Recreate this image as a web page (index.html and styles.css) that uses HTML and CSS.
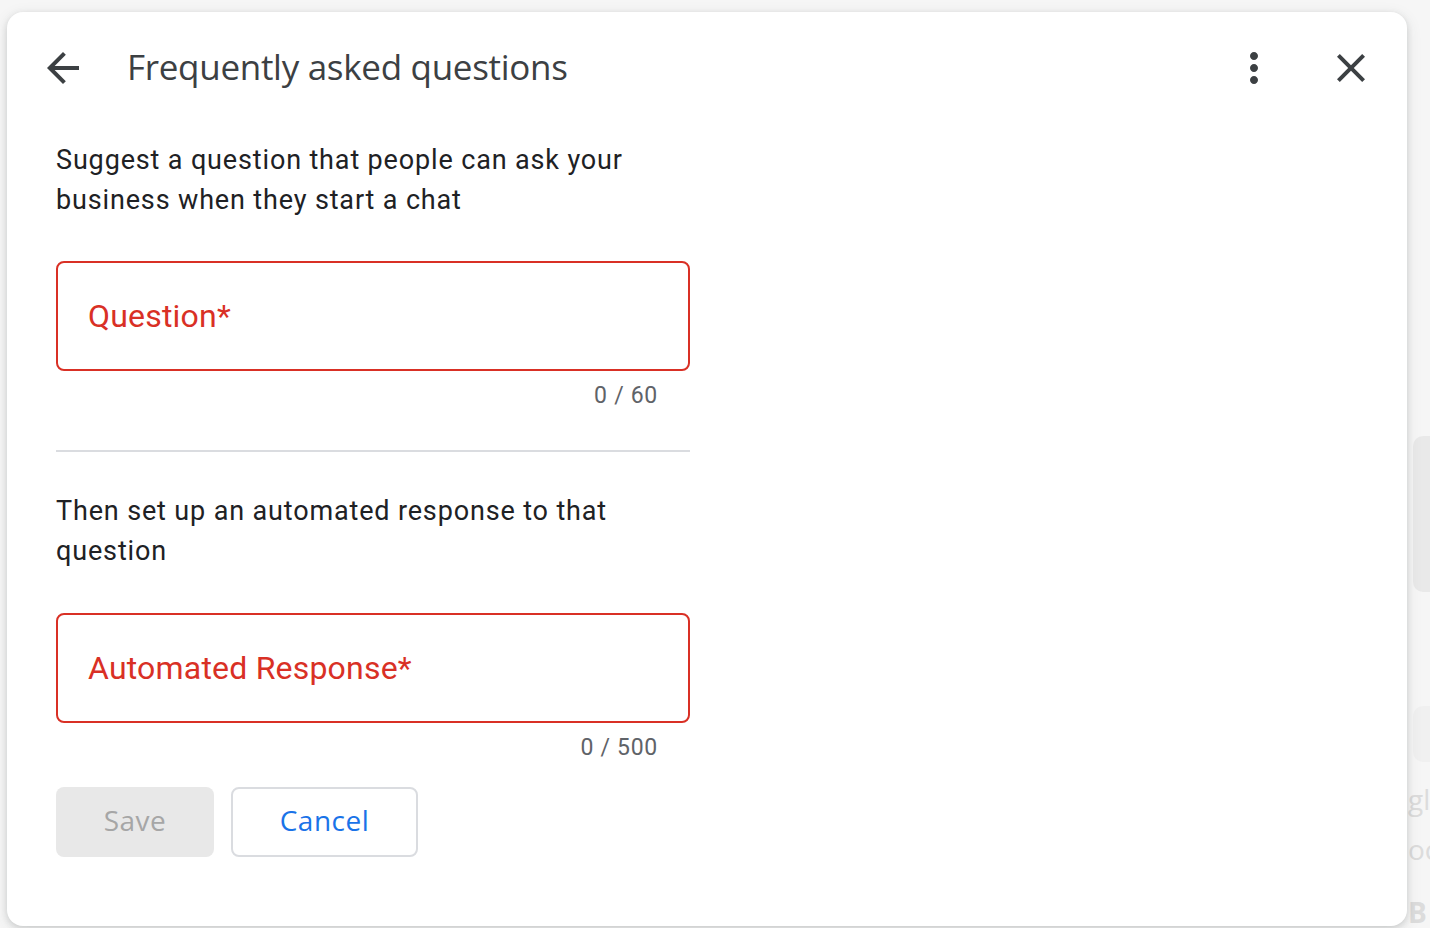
FILE: index.html
```html
<!DOCTYPE html>
<html lang="en">
<head>
<meta charset="utf-8">
<title>Frequently asked questions</title>
<link rel="stylesheet" href="styles.css">
</head>
<body>
<div class="backdrop" aria-hidden="true">
  <div class="bg-card"></div>
  <div class="bg-card bg-card-2"></div>
  <span class="bg-text bg-t1">gl</span>
  <span class="bg-text bg-t2">oc</span>
  <span class="bg-text bg-t3">B</span>
</div>
<div class="dialog">
  <header class="dlg-header">
    <button class="icon-btn" aria-label="Back">
      <svg viewBox="0 0 24 24" width="48" height="48"><path d="M20 11H7.830l5.590-5.590L12 4l-8 8 8 8 1.410-1.410L7.830 13H20v-2z"/></svg>
    </button>
    <h1 class="dlg-title">Frequently asked questions</h1>
    <div class="header-actions">
      <button class="icon-btn" aria-label="More">
        <svg viewBox="0 0 24 24" width="48" height="48"><path d="M12 8c1.1 0 2-.9 2-2s-.9-2-2-2-2 .9-2 2 .9 2 2 2zm0 2c-1.1 0-2 .9-2 2s.9 2 2 2 2-.9 2-2-.9-2-2-2zm0 6c-1.1 0-2 .9-2 2s.9 2 2 2 2-.9 2-2-.9-2-2-2z"/></svg>
      </button>
      <button class="icon-btn" aria-label="Close">
        <svg viewBox="0 0 24 24" width="48" height="48"><path d="M19 6.41L17.59 5 12 10.59 6.41 5 5 6.41 10.59 12 5 17.59 6.41 19 12 13.41 17.59 19 19 17.59 13.41 12z"/></svg>
      </button>
    </div>
  </header>
  <main class="dlg-body">
    <p class="intro">Suggest a question that people can ask your business when they start a chat</p>
    <div class="field"><span class="field-label">Question*</span></div>
    <div class="counter">0 / 60</div>
    <hr class="divider">
    <p class="intro intro-2">Then set up an automated response to that question</p>
    <div class="field field-2"><span class="field-label">Automated Response*</span></div>
    <div class="counter">0 / 500</div>
    <div class="actions">
      <button class="btn btn-save" disabled>Save</button>
      <button class="btn btn-cancel">Cancel</button>
    </div>
  </main>
</div>
</body>
</html>
```

FILE: styles.css
```css
* { box-sizing: border-box; }

html, body {
  margin: 0;
  height: 100%;
}

body {
  background: #f6f6f6;
  padding: 12px 23px 0 7px;
  overflow: hidden;
  position: relative;
  font-family: Roboto, "Liberation Sans", Arial, sans-serif;
}

.backdrop {
  position: absolute;
  inset: 0;
  z-index: 0;
  overflow: hidden;
}

.bg-card {
  position: absolute;
  left: 1413px;
  top: 436px;
  width: 40px;
  height: 156px;
  border-radius: 10px;
  background: #e9e9e9;
}

.bg-card-2 {
  top: 706px;
  height: 56px;
  background: #f0f0f0;
}

.bg-text {
  position: absolute;
  left: 1408px;
  font-size: 28px;
  color: #dcdcdc;
  font-family: "Open Sans", sans-serif;
}
.bg-t1 { top: 780px; }
.bg-t2 { top: 830px; }
.bg-t3 { top: 893px; font-weight: 700; }

.dialog {
  position: relative;
  z-index: 1;
  width: 1400px;
  height: 914px;
  background: #fff;
  border-radius: 16px;
  box-shadow: 0 2px 6px rgba(60, 64, 67, 0.18), 0 4px 16px rgba(60, 64, 67, 0.10);
}

.dlg-header {
  height: 112px;
  display: flex;
  align-items: center;
  padding: 0 32px 0 32px;
}

.icon-btn {
  width: 48px;
  height: 48px;
  padding: 0;
  border: 0;
  background: transparent;
  display: flex;
  align-items: center;
  justify-content: center;
  fill: #3c4043;
}

.icon-btn svg { display: block; }

.dlg-title {
  margin: 0 0 4px 40px;
  font-family: "Open Sans", "Liberation Sans", sans-serif;
  font-weight: 400;
  font-size: 35px;
  letter-spacing: -0.3px;
  color: #3c4043;
  flex: 1;
}

.header-actions {
  display: flex;
  align-items: center;
  gap: 49px;
}

.dlg-body {
  padding: 16px 0 0 49px;
  width: 683px;
}

.intro {
  margin: 0;
  font-size: 27px;
  line-height: 40px;
  letter-spacing: 0.85px;
  color: #202124;
}

.intro-2 { margin-top: 39px; }

.field {
  margin-top: 41px;
  height: 110px;
  border: 2px solid #d93025;
  border-radius: 8px;
  display: flex;
  align-items: center;
  padding: 0 30px;
}

.field-label {
  font-size: 32px;
  color: #d93025;
  letter-spacing: 0.2px;
}

.counter {
  margin-top: 13px;
  height: 24px;
  line-height: 24px;
  font-size: 23px;
  color: #5f6368;
  text-align: right;
  padding-right: 32px;
  letter-spacing: 0.7px;
}

.divider {
  margin: 42px 0 0;
  border: 0;
  height: 2px;
  background: #dadce0;
}

.field-2 { margin-top: 42px; }

.actions {
  margin-top: 27px;
  display: flex;
  gap: 17px;
}

.btn {
  height: 70px;
  border-radius: 8px;
  font-family: "Open Sans", "Liberation Sans", sans-serif;
  font-size: 28px;
  font-weight: 500;
  letter-spacing: 0.5px;
  padding: 0 0 4px;
}

.btn-save {
  width: 158px;
  background: #e8e8e8;
  color: #a6a6a6;
  border: 0;
}

.btn-cancel {
  width: 187px;
  background: #fff;
  color: #1a73e8;
  border: 2px solid #dadce0;
}
```
